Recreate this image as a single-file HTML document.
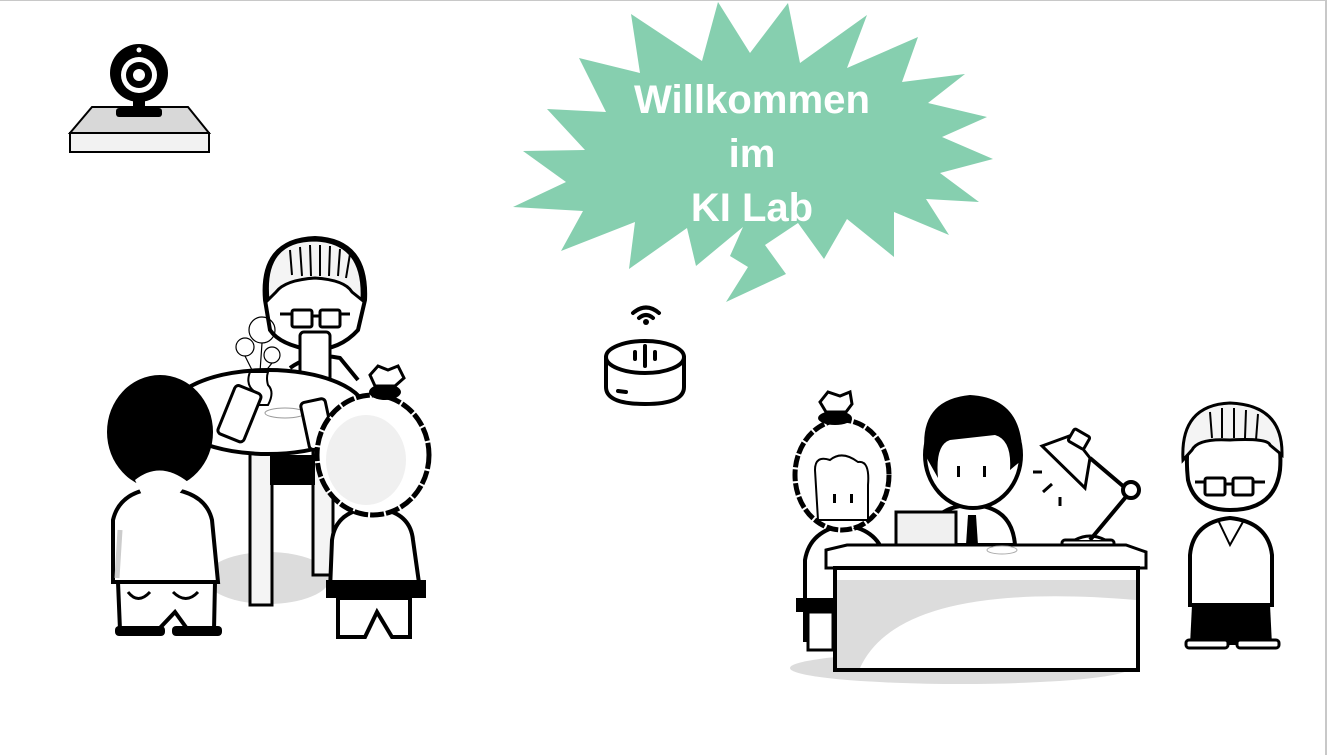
<!DOCTYPE html>
<html><head><meta charset="utf-8"><style>
html,body{margin:0;padding:0;background:#fff;}
body{width:1327px;height:756px;overflow:hidden;position:relative;}
.frame{position:absolute;left:0;top:0;width:1325px;height:754px;border-top:1px solid #c8c8c8;border-right:2px solid #c8c8c8;}
svg{position:absolute;left:0;top:0;}
</style></head><body>
<div class="frame"></div>
<svg width="1327" height="756" viewBox="0 0 1327 756">
<polygon fill="#86cfaf" points="718,2 750,53 788,3 800,63 867,15 847,68 918,37 902,82 965,74 928,103 987,117 942,137 993,159 940,173 979,202 926,199 949,235 894,212 894,257 847,219 824,259 798,223 765,245 786,274 726,302 748,267 730,256 743,227 696,266 687,228 629,269 635,222 561,251 583,211 513,207 566,182 523,151 585,150 547,109 606,112 579,58 640,73 631,14 702,61"/>
<g font-family="'Liberation Sans',sans-serif" font-weight="bold" font-size="40" fill="#fff" text-anchor="middle">
<text x="752" y="113" textLength="236" lengthAdjust="spacingAndGlyphs">Willkommen</text>
<text x="752" y="167">im</text>
<text x="752" y="221">KI Lab</text>
</g>

<polygon points="70,133 92,107 188,107 209,133" fill="#d8d8d8" stroke="#000" stroke-width="2"/>
<rect x="70" y="133" width="139" height="19" fill="#f2f2f2" stroke="#000" stroke-width="2"/>
<rect x="116" y="108" width="46" height="9" rx="3" fill="#000"/>
<rect x="133" y="95" width="12" height="15" fill="#000"/>
<circle cx="139" cy="73" r="29" fill="#000"/>
<circle cx="139" cy="50" r="2.5" fill="#fff"/>
<circle cx="139" cy="75" r="18" fill="#fff"/>
<circle cx="139" cy="75" r="13" fill="#000"/>
<circle cx="139" cy="75" r="6" fill="#fff"/>

<g fill="none" stroke="#000" stroke-width="4" stroke-linecap="round">
<path d="M633,313 Q646,302 659,313"/><path d="M639,318 Q646,312 653,318"/>
<path d="M606,357 L606,387 Q606,404 645,404 Q684,404 684,387 L684,357"/>
<ellipse cx="645" cy="357" rx="39" ry="16"/>
<path d="M618,391 L626,392"/>
<path d="M635,352 L635,359 M645,346 L645,366 M655,352 L655,359"/>
</g>
<circle cx="646" cy="322" r="3" fill="#000"/>

<ellipse cx="268" cy="578" rx="62" ry="26" fill="#dcdcdc"/>
<path d="M265,300 Q260,240 315,238 Q368,240 365,300 L358,330 Q340,350 312,350 Q280,345 270,330 Z" fill="#fff" stroke="#000" stroke-width="4"/>
<path d="M268,300 Q262,240 315,240 Q365,242 362,300 L352,292 Q345,280 315,278 Q285,280 276,292 Z" fill="#f4f4f4" stroke="#000" stroke-width="3"/>
<g stroke="#000" stroke-width="2" fill="none"><path d="M290,250 L292,275 M300,247 L302,276 M310,245 L311,276 M320,245 L320,276 M330,246 L329,276 M340,249 L338,276 M350,254 L346,278"/></g>
<g fill="none" stroke="#000" stroke-width="3"><rect x="292" y="310" width="20" height="17" rx="2"/><rect x="320" y="310" width="20" height="17" rx="2"/><path d="M312,316 L320,316 M280,314 L292,314 M340,314 L350,314"/></g>
<path d="M290,368 Q312,352 340,358 L358,380" fill="#fff" stroke="#000" stroke-width="4"/>
<rect x="300" y="332" width="30" height="58" rx="4" fill="#fff" stroke="#000" stroke-width="3"/>
<rect x="250" y="452" width="22" height="153" fill="#f4f4f4" stroke="#000" stroke-width="3"/>
<rect x="313" y="450" width="20" height="125" fill="#f4f4f4" stroke="#000" stroke-width="3"/>
<rect x="270" y="455" width="45" height="30" fill="#000"/>
<ellipse cx="268" cy="412" rx="98" ry="42" fill="#fff" stroke="#000" stroke-width="4"/>
<ellipse cx="285" cy="413" rx="20" ry="5" fill="none" stroke="#999" stroke-width="1"/>
<path d="M250,372 Q245,385 255,392 Q262,398 255,405 L268,405 Q275,392 268,385 Q266,378 268,372 Z" fill="#fff" stroke="#000" stroke-width="2"/>
<g fill="none" stroke="#000" stroke-width="1.2">
<circle cx="262" cy="330" r="13"/><circle cx="245" cy="347" r="9"/><circle cx="272" cy="355" r="8"/>
<path d="M262,343 L260,372 M245,356 L253,372 M272,363 L265,372"/>
</g>
<g transform="rotate(22 240 415)"><rect x="225" y="388" width="28" height="52" rx="4" fill="#fff" stroke="#000" stroke-width="3"/></g>
<g transform="rotate(-12 318 425)"><rect x="305" y="400" width="25" height="48" rx="4" fill="#fff" stroke="#000" stroke-width="3"/></g>
<path d="M113,520 Q120,490 160,488 Q205,490 212,520 L218,582 L113,582 Z" fill="#fff" stroke="#000" stroke-width="4"/>
<path d="M120,530 L117,578" stroke="#ccc" stroke-width="5"/>
<path d="M118,582 L215,582 L214,630 L188,630 L175,612 L158,630 L120,630 Z" fill="#fff" stroke="#000" stroke-width="4"/>
<path d="M128,592 Q138,605 150,592 M173,592 Q186,605 198,592" fill="none" stroke="#000" stroke-width="3"/>
<rect x="115" y="626" width="50" height="10" rx="4" fill="#000"/><rect x="172" y="626" width="50" height="10" rx="4" fill="#000"/>
<ellipse cx="160" cy="432" rx="53" ry="57" fill="#000"/>
<path d="M135,480 Q160,460 188,482 L178,495 L142,495 Z" fill="#fff"/>
<path d="M332,540 Q336,510 372,508 Q410,510 413,540 L420,590 L330,590 Z" fill="#fff" stroke="#000" stroke-width="4"/>
<rect x="326" y="580" width="100" height="18" fill="#000"/>
<path d="M338,598 L410,598 L410,637 L392,637 L377,612 L365,637 L338,637 Z" fill="#fff" stroke="#000" stroke-width="4"/>
<ellipse cx="373" cy="455" rx="56" ry="60" fill="#fff" stroke="#000" stroke-width="5" stroke-dasharray="14 2"/>
<ellipse cx="366" cy="460" rx="40" ry="45" fill="#f0f0f0"/>
<ellipse cx="385" cy="392" rx="16" ry="8" fill="#000"/>
<path d="M370,375 L378,366 L388,370 L398,366 L404,378 L395,386 L375,386 Z" fill="#fff" stroke="#000" stroke-width="3"/>

<ellipse cx="960" cy="668" rx="170" ry="16" fill="#dcdcdc"/>
<path d="M805,560 Q810,530 845,525 Q880,530 885,560 L885,640 L805,640 Z" fill="#fff" stroke="#000" stroke-width="4"/>
<rect x="796" y="598" width="40" height="14" fill="#000"/>
<rect x="808" y="612" width="25" height="38" fill="#fff" stroke="#000" stroke-width="3"/>
<ellipse cx="842" cy="475" rx="47" ry="55" fill="#fff" stroke="#000" stroke-width="5" stroke-dasharray="12 2"/>
<path d="M815,470 Q815,455 830,460 Q842,450 858,462 Q870,460 868,485 L868,520 L818,520 Z" fill="#fff" stroke="#000" stroke-width="2"/>
<rect x="833" y="494" width="3" height="9" fill="#000"/><rect x="850" y="494" width="3" height="9" fill="#000"/>
<ellipse cx="835" cy="418" rx="17" ry="7" fill="#000"/>
<path d="M820,402 L828,392 L840,396 L850,392 L852,404 L846,412 L826,412 Z" fill="#fff" stroke="#000" stroke-width="3"/>
<path d="M925,545 Q930,505 973,505 Q1012,507 1015,545 Z" fill="#fff" stroke="#000" stroke-width="4"/>
<path d="M968,515 L976,515 L978,545 L966,545 Z" fill="#000"/>
<ellipse cx="973" cy="455" rx="48" ry="53" fill="#fff" stroke="#000" stroke-width="4"/>
<path d="M925,455 Q918,400 970,395 Q1025,398 1022,460 L1010,470 Q1012,440 995,435 L950,440 Q935,445 938,478 Z" fill="#000"/>
<rect x="957" y="466" width="3" height="11" fill="#000"/><rect x="983" y="466" width="3" height="11" fill="#000"/>
<rect x="896" y="512" width="60" height="42" fill="#f0f0f0" stroke="#000" stroke-width="3"/>
<rect x="1062" y="540" width="52" height="12" rx="3" fill="#fff" stroke="#000" stroke-width="3"/>
<path d="M1075,540 Q1090,532 1105,540" fill="#fff" stroke="#000" stroke-width="3"/>
<path d="M1090,540 L1130,492 L1090,458" fill="none" stroke="#000" stroke-width="4"/>
<circle cx="1131" cy="490" r="8" fill="#fff" stroke="#000" stroke-width="4"/>
<polygon points="1042,446 1072,435 1090,458 1085,488" fill="#fff" stroke="#000" stroke-width="3"/>
<rect x="1070" y="432" width="18" height="14" rx="2" transform="rotate(30 1079 439)" fill="#fff" stroke="#000" stroke-width="3"/>
<path d="M1033,472 L1042,472 M1043,492 L1052,484 M1060,497 L1060,506" stroke="#000" stroke-width="3"/>
<polygon points="826,550 847,545 1126,545 1146,552 1146,568 826,568" fill="#fff" stroke="#000" stroke-width="3"/>
<ellipse cx="1002" cy="550" rx="15" ry="4" fill="none" stroke="#aaa"/>
<rect x="835" y="568" width="303" height="102" fill="#fff" stroke="#000" stroke-width="4"/>
<path d="M837,580 L1136,580 L1136,600 Q900,580 860,668 L837,668 Z" fill="#dcdcdc"/>
<path d="M1188,480 Q1195,510 1230,510 Q1275,510 1280,470 Q1285,410 1230,405 Q1180,408 1188,480 Z" fill="#fff" stroke="#000" stroke-width="4"/>
<path d="M1183,460 Q1180,405 1230,403 Q1283,405 1282,455 L1270,445 Q1268,438 1230,440 Q1198,438 1192,450 Z" fill="#f4f4f4" stroke="#000" stroke-width="3"/>
<g stroke="#000" stroke-width="2"><path d="M1210,412 L1212,438 M1222,408 L1222,438 M1234,408 L1234,438 M1246,410 L1245,438 M1258,414 L1256,440"/></g>
<g fill="none" stroke="#000" stroke-width="3"><rect x="1205" y="478" width="20" height="17" rx="2"/><rect x="1233" y="478" width="20" height="17" rx="2"/><path d="M1225,484 L1233,484 M1195,482 L1205,482 M1253,482 L1265,482"/></g>
<path d="M1190,555 Q1193,522 1230,518 Q1268,522 1272,555 L1272,605 L1190,605 Z" fill="#fff" stroke="#000" stroke-width="4"/>
<path d="M1218,520 L1230,545 L1244,520" fill="none" stroke="#000" stroke-width="2"/>
<path d="M1192,605 L1270,605 L1272,645 L1190,645 Z" fill="#000"/>
<rect x="1186" y="640" width="42" height="8" rx="3" fill="#fff" stroke="#000" stroke-width="3"/><rect x="1237" y="640" width="42" height="8" rx="3" fill="#fff" stroke="#000" stroke-width="3"/>
</svg>
</body></html>
